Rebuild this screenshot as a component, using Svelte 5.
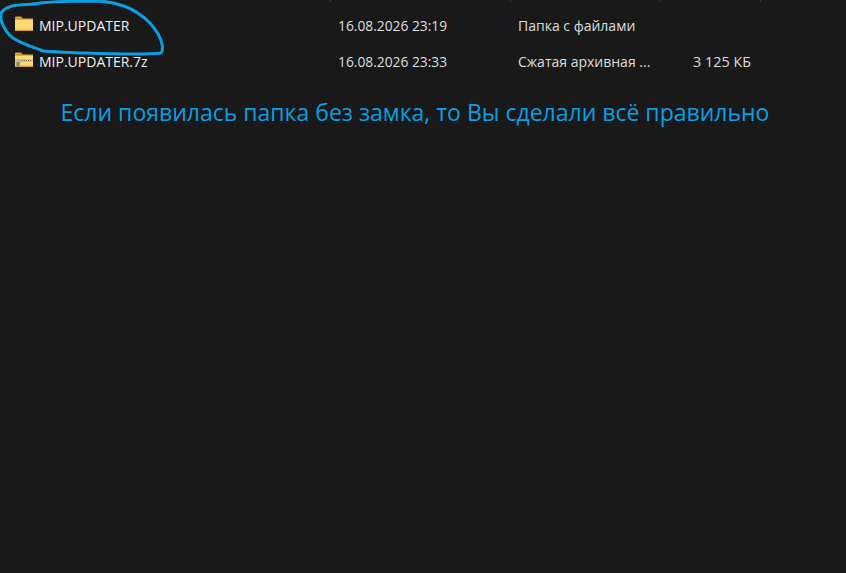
<script>
  const files = [
    { name: 'MIP.UPDATER', date: '16.08.2026 23:19', type: 'Папка с файлами', size: '', zip: false },
    { name: 'MIP.UPDATER.7z', date: '16.08.2026 23:33', type: 'Сжатая архивная ...', size: '3 125 КБ', zip: true }
  ];
</script>

<main class="page">
  <div class="ticks">
    <i></i><i></i><i></i><i></i>
  </div>
  <div class="list">
    {#each files as f}
      <div class="row">
        <div class="name">
          <svg class="icon" width="20" height="16" viewBox="0 0 20 16">
            <path d="M1 1.5a1 1 0 0 1 1-1h5l2 2.2H1z" fill="#e0a526" />
            <rect x="1" y="2.5" width="18" height="12" fill="#e5ac35" />
            <rect x="1" y="4" width="18" height="10.5" fill="#fdd873" />
            <rect x="1" y="13.7" width="18" height="0.9" fill="#dfa02a" />
            {#if f.zip}
              <rect x="1" y="7" width="18" height="3" fill="#c9c3ac" />
              <path d="M6 8.5h12" stroke="#77735f" stroke-dasharray="1 1" stroke-width="1.2" />
              <rect x="1.5" y="7" width="5" height="7.6" fill="#bdb8a8" />
              <rect x="2.5" y="10" width="3" height="4.6" fill="#8c8778" />
            {/if}
          </svg>
          <span>{f.name}</span>
        </div>
        <div class="date">{f.date}</div>
        <div class="type">{f.type}</div>
        <div class="size">{f.size}</div>
      </div>
    {/each}
  </div>
  <p class="note">Если появилась папка без замка, то Вы сделали всё правильно</p>
  <svg class="circle" width="170" height="60" viewBox="0 0 170 60">
    <path
      d="M1 13 C4 8 9 7 12 6 C22 4 33 5 40 3 C60 1 80 1 100 1 C112 2 118 4 124 6 C135 10 143 16 150 23 C156 30 161 38 162 44 C163 49 162 52 161 53 C145 55 115 54 84 53 C65 52 50 52 43 51 C33 47 22 44 13 38 C7 34 3 26 1 20 C1 17 1 15 1 13 Z"
      fill="none" stroke="#0a9fe3" stroke-width="3" stroke-linejoin="round" />
  </svg>
</main>

<style>
  :global(body) {
    margin: 0;
    background: #191919;
  }
  .page {
    position: relative;
    width: 846px;
    height: 573px;
    background: #191919;
    overflow: hidden;
    font-family: "Open Sans", "Noto Sans", "Liberation Sans", sans-serif;
  }
  .ticks {
    position: absolute;
    top: 0;
    left: 0;
    width: 100%;
    height: 2px;
  }
  .ticks i {
    position: absolute;
    top: 0;
    width: 1px;
    height: 2px;
    background: #3a3a3a;
  }
  .ticks i:nth-child(1) { left: 330px; }
  .ticks i:nth-child(2) { left: 510px; }
  .ticks i:nth-child(3) { left: 660px; }
  .ticks i:nth-child(4) { left: 760px; }
  .list {
    display: flex;
    flex-direction: column;
    padding-top: 8px;
  }
  .row {
    display: grid;
    grid-template-columns: 338px 180px 175px 100px;
    height: 36px;
    align-items: center;
    font-size: 14px;
    color: #dedede;
    box-sizing: border-box;
    padding-bottom: 1px;
  }
  .date {
    font-size: 13.8px;
  }
  .size {
    font-size: 14.4px;
  }
  .name {
    display: flex;
    align-items: center;
    padding-left: 14px;
    gap: 5px;
    color: #f0f0f0;
  }
  .icon {
    flex: none;
    margin-top: -4px;
  }
  .note {
    margin: 17px 0 0;
    width: 830px;
    text-align: center;
    font-size: 23px;
    line-height: 30px;
    color: #0a9fe3;
  }
  .circle {
    position: absolute;
    left: 0;
    top: 0;
    pointer-events: none;
  }
</style>
